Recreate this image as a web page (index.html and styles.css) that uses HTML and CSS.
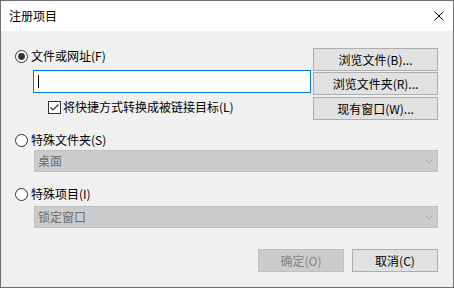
FILE: index.html
```html
<!DOCTYPE html>
<html lang="zh-CN">
<head>
<meta charset="utf-8">
<title>注册项目</title>
<link rel="stylesheet" href="styles.css">
</head>
<body>
<div class="window">
  <div class="titlebar">
    <span class="title">注册项目</span>
    <svg class="close" width="10" height="10" viewBox="0 0 10 10"><path d="M0.5 0.5L9.5 9.5M9.5 0.5L0.5 9.5" stroke="#000" stroke-width="1" fill="none"/></svg>
  </div>
  <div class="content">
    <div class="top">
      <div class="left">
        <div class="option">
          <svg class="radio" width="13" height="13" viewBox="0 0 13 13"><circle cx="6.5" cy="6.5" r="6" fill="#fff" stroke="#333" stroke-width="1"/><circle cx="6.5" cy="6.5" r="3.4" fill="#333"/></svg>
          <span>文件或网址(F)</span>
        </div>
        <div class="textbox"><span class="caret"></span></div>
        <div class="check-row">
          <svg class="checkbox" width="13" height="13" viewBox="0 0 13 13"><rect x="0.5" y="0.5" width="12" height="12" fill="#fff" stroke="#333" stroke-width="1"/><path d="M2.5 6.5L5 9L10.5 3.5" stroke="#333" stroke-width="1.2" fill="none"/></svg>
          <span>将快捷方式转换成被链接目标(L)</span>
        </div>
      </div>
      <div class="buttons">
        <div class="btn">浏览文件(B)...</div>
        <div class="btn">浏览文件夹(R)...</div>
        <div class="btn third">现有窗口(W)...</div>
      </div>
    </div>
    <div class="option opt2">
      <svg class="radio" width="13" height="13" viewBox="0 0 13 13"><circle cx="6.5" cy="6.5" r="6" fill="#fff" stroke="#333" stroke-width="1"/></svg>
      <span>特殊文件夹(S)</span>
    </div>
    <div class="combo combo1">
      <span>桌面</span>
      <svg class="chev" width="8" height="5" viewBox="0 0 8 5"><path d="M0.5 0.5L4 4L7.5 0.5" stroke="#a6a6a6" stroke-width="1" fill="none"/></svg>
    </div>
    <div class="option opt3">
      <svg class="radio" width="13" height="13" viewBox="0 0 13 13"><circle cx="6.5" cy="6.5" r="6" fill="#fff" stroke="#333" stroke-width="1"/></svg>
      <span>特殊项目(I)</span>
    </div>
    <div class="combo combo2">
      <span>锁定窗口</span>
      <svg class="chev" width="8" height="5" viewBox="0 0 8 5"><path d="M0.5 0.5L4 4L7.5 0.5" stroke="#a6a6a6" stroke-width="1" fill="none"/></svg>
    </div>
    <div class="footer">
      <div class="btn small disabled">确定(O)</div>
      <div class="btn small">取消(C)</div>
    </div>
  </div>
</div>
</body>
</html>
```

FILE: styles.css
```css
* { box-sizing: border-box; }
html, body { margin: 0; padding: 0; }
body {
  width: 454px;
  height: 288px;
  overflow: hidden;
  font-family: "Noto Sans CJK SC", "Microsoft YaHei UI", sans-serif;
  font-size: 12px;
  color: #000;
  background: #f0f0f0;
}
.window {
  width: 454px;
  height: 288px;
  border: 1px solid #6f6f6f;
  display: flex;
  flex-direction: column;
  background: #f0f0f0;
}
.titlebar {
  height: 30px;
  flex: none;
  background: #fff;
  display: flex;
  align-items: center;
  justify-content: space-between;
  padding: 0 9px 1px 8px;
}
.title { line-height: 16px; }
.close { display: block; }
.content {
  flex: 1;
  padding: 17px 15px 0 14px;
  display: flex;
  flex-direction: column;
}
.top {
  display: flex;
  gap: 2px;
  height: 72px;
}
.left {
  flex: 1;
  display: flex;
  flex-direction: column;
}
.option {
  height: 16px;
  display: flex;
  align-items: center;
  gap: 3px;
  line-height: 16px;
  white-space: nowrap;
}
.radio, .checkbox { display: block; flex: none; }
.textbox {
  margin: 6px 0 0 18px;
  height: 23px;
  background: #fff;
  border: 1px solid #0078d7;
  padding: 4px 0 0 4px;
}
.caret {
  display: block;
  width: 1px;
  height: 13px;
  background: #000;
}
.check-row {
  margin: 6px 0 0 33px;
  height: 16px;
  display: flex;
  align-items: center;
  gap: 2px;
  line-height: 16px;
  white-space: nowrap;
}
.buttons {
  width: 125px;
  flex: none;
  display: flex;
  flex-direction: column;
  gap: 1px;
}
.btn {
  height: 23px;
  background: #e1e1e1;
  border: 1px solid #adadad;
  display: flex;
  align-items: center;
  justify-content: center;
  line-height: 16px;
  white-space: nowrap;
}
.btn.third { margin-top: 1px; }
.opt2 { margin-top: 12px; }
.opt3 { margin-top: 14px; }
.combo {
  margin: 2px 0 0 19px;
  height: 22px;
  background: #cccccc;
  border: 1px solid #bfbfbf;
  color: #6d6d6d;
  display: flex;
  align-items: center;
  justify-content: space-between;
  padding: 0 4px 0 3px;
  line-height: 16px;
}
.combo2 { margin-top: 4px; }
.chev { display: block; }
.footer {
  margin-top: 21px;
  display: flex;
  justify-content: flex-end;
  gap: 8px;
}
.btn.small { width: 86px; }
.btn.disabled {
  background: #cccccc;
  border-color: #bfbfbf;
  color: #838383;
}
```
